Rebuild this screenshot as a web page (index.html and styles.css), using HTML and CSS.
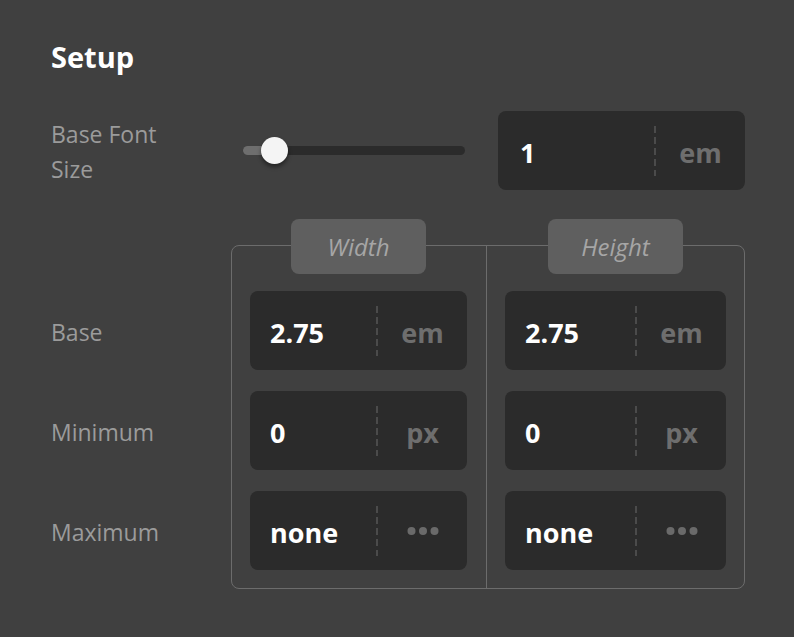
FILE: index.html
```html
<!DOCTYPE html>
<html>
<head>
  <title>Setup</title>
  <meta charset="UTF-8">
  <meta name="viewport" content="width=device-width, initial-scale=1.0">
  <link rel="stylesheet" href="styles.css">
</head>
<body>
  <div class="panel">
    <h1>Setup</h1>

    <div class="setup-row">
      <div class="field-label font-label">Base Font Size</div>
      <div class="slider">
        <div class="slider-fill"></div>
        <div class="slider-thumb"></div>
      </div>
      <div class="field wide">
        <span class="field-value">1</span>
        <span class="field-sep"></span>
        <span class="field-unit">em</span>
      </div>
    </div>

    <div class="size-section">
      <div class="row-labels">
        <div class="field-label row-label">Base</div>
        <div class="field-label row-label">Minimum</div>
        <div class="field-label row-label">Maximum</div>
      </div>

      <div class="size-group">
        <div class="size-col">
          <div class="col-tab">Width</div>
          <div class="field">
            <span class="field-value">2.75</span>
            <span class="field-sep"></span>
            <span class="field-unit">em</span>
          </div>
          <div class="field">
            <span class="field-value">0</span>
            <span class="field-sep"></span>
            <span class="field-unit">px</span>
          </div>
          <div class="field">
            <span class="field-value">none</span>
            <span class="field-sep"></span>
            <span class="field-unit">
              <svg width="32" height="10" viewBox="0 0 32 10" fill="currentColor">
                <circle cx="4.5" cy="5" r="4" />
                <circle cx="16" cy="5" r="4" />
                <circle cx="27.5" cy="5" r="4" />
              </svg>
            </span>
          </div>
        </div>

        <div class="size-col">
          <div class="col-tab">Height</div>
          <div class="field">
            <span class="field-value">2.75</span>
            <span class="field-sep"></span>
            <span class="field-unit">em</span>
          </div>
          <div class="field">
            <span class="field-value">0</span>
            <span class="field-sep"></span>
            <span class="field-unit">px</span>
          </div>
          <div class="field">
            <span class="field-value">none</span>
            <span class="field-sep"></span>
            <span class="field-unit">
              <svg width="32" height="10" viewBox="0 0 32 10" fill="currentColor">
                <circle cx="4.5" cy="5" r="4" />
                <circle cx="16" cy="5" r="4" />
                <circle cx="27.5" cy="5" r="4" />
              </svg>
            </span>
          </div>
        </div>
      </div>
    </div>
  </div>
</body>
</html>
```

FILE: styles.css
```css
body {
  font-family: "Open Sans", "Noto Sans", sans-serif;
  margin: 0;
  padding: 0;
  background-color: #404040;
  color: #ffffff;
}

.panel {
  padding: 37px 49px 0 51px;
}

.panel h1 {
  margin: 0;
  font-size: 29px;
  font-weight: 700;
  line-height: 40px;
}

/* base font size row */
.setup-row {
  display: flex;
  align-items: center;
  margin-top: 34px;
}

.field-label {
  color: #9b9b9b;
  font-size: 23px;
  line-height: 35px;
}

.font-label {
  width: 192px;
  padding: 3px 62px 0 0;
  box-sizing: border-box;
}

.slider {
  position: relative;
  width: 222px;
  height: 9px;
  background-color: #2b2b2b;
  border-radius: 5px;
}

.slider-fill {
  width: 30px;
  height: 100%;
  background-color: #6e6e6e;
  border-radius: 5px 0 0 5px;
}

.slider-thumb {
  position: absolute;
  left: 18px;
  top: -9px;
  width: 27px;
  height: 27px;
  border-radius: 50%;
  background-color: #f4f4f4;
  box-shadow: 0 3px 4px rgba(0, 0, 0, 0.45);
}

/* value fields */
.field {
  display: flex;
  align-items: center;
  height: 79px;
  background-color: #2b2b2b;
  border-radius: 8px;
}

.field.wide {
  width: 247px;
  margin-left: 33px;
}

.field.wide .field-value {
  padding-left: 22px;
}

.field-value {
  flex: 1;
  padding: 3px 0 0 20px;
  font-size: 27px;
  font-weight: 700;
}

.field-sep {
  width: 2px;
  height: 50px;
  background: repeating-linear-gradient(to bottom, #4b4b4b 0, #4b4b4b 7px, transparent 7px, transparent 11px);
}

.field-unit {
  width: 89px;
  padding-top: 3px;
  text-align: center;
  font-size: 27px;
  font-weight: 700;
  color: #6e6e6e;
  display: flex;
  justify-content: center;
  align-items: center;
}

.field-unit svg {
  color: #6a6a6a;
  margin-top: -2px;
}

/* width / height group */
.size-section {
  display: flex;
  margin-top: 55px;
}

.row-labels {
  width: 180px;
  display: flex;
  flex-direction: column;
  gap: 21px;
  padding-top: 46px;
}

.row-label {
  height: 79px;
  padding-top: 3px;
  box-sizing: border-box;
  display: flex;
  align-items: center;
}

.size-group {
  flex: 1;
  display: grid;
  grid-template-columns: 254px 1fr;
  border: 1px solid #6c6c6c;
  border-radius: 8px;
}

.size-col {
  display: flex;
  flex-direction: column;
  gap: 21px;
  padding: 0 19px 18px 18px;
}

.size-col + .size-col {
  border-left: 1px solid #6c6c6c;
  padding: 0 18px 18px;
}

.col-tab {
  align-self: center;
  width: 135px;
  height: 55px;
  margin: -27px 0 -4px;
  background-color: #5f5f5f;
  border-radius: 8px;
  color: #a6a6a6;
  font-size: 24px;
  font-style: italic;
  display: flex;
  align-items: center;
  justify-content: center;
}
```
